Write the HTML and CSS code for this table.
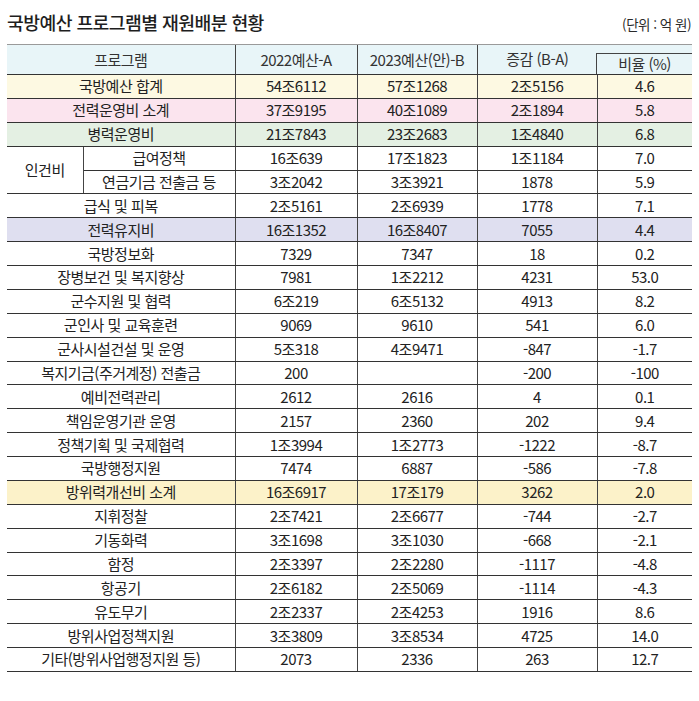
FILE: index.html
```html
<!DOCTYPE html>
<html lang="ko">
<head>
<meta charset="utf-8">
<link rel="stylesheet" href="styles.css">
</head>
<body>
<div class="page">
  <div class="titlebar">
    <h1 class="title">국방예산 프로그램별 재원배분 현황</h1>
    <span class="unit">(단위 : 억 원)</span>
  </div>
  <table class="budget">
    <colgroup>
      <col class="c-sub"><col class="c-prog"><col class="c-num"><col class="c-num2"><col class="c-num3"><col class="c-ratio">
    </colgroup>
    <thead>
      <tr>
        <th colspan="2" class="first">프로그램</th>
        <th>2022예산-A</th>
        <th>2023예산(안)-B</th>
        <th class="delta">증감 (B-A)</th>
        <th class="ratio"><div class="ratio-box">비율 (%)</div></th>
      </tr>
    </thead>
    <tbody>
      <tr class="yellow"><td colspan="2" class="first">국방예산 합계</td><td>54조6112</td><td>57조1268</td><td>2조5156</td><td>4.6</td></tr>
      <tr class="pink"><td colspan="2" class="first">전력운영비 소계</td><td>37조9195</td><td>40조1089</td><td>2조1894</td><td>5.8</td></tr>
      <tr class="green"><td colspan="2" class="first">병력운영비</td><td>21조7843</td><td>23조2683</td><td>1조4840</td><td>6.8</td></tr>
      <tr><td rowspan="2" class="first sub">인건비</td><td>급여정책</td><td>16조639</td><td>17조1823</td><td>1조1184</td><td>7.0</td></tr>
      <tr><td class="inner">연금기금 전출금 등</td><td>3조2042</td><td>3조3921</td><td>1878</td><td>5.9</td></tr>
      <tr><td colspan="2" class="first">급식 및 피복</td><td>2조5161</td><td>2조6939</td><td>1778</td><td>7.1</td></tr>
      <tr class="lavender"><td colspan="2" class="first">전력유지비</td><td>16조1352</td><td>16조8407</td><td>7055</td><td>4.4</td></tr>
      <tr><td colspan="2" class="first">국방정보화</td><td>7329</td><td>7347</td><td>18</td><td>0.2</td></tr>
      <tr><td colspan="2" class="first">장병보건 및 복지향상</td><td>7981</td><td>1조2212</td><td>4231</td><td>53.0</td></tr>
      <tr><td colspan="2" class="first">군수지원 및 협력</td><td>6조219</td><td>6조5132</td><td>4913</td><td>8.2</td></tr>
      <tr><td colspan="2" class="first">군인사 및 교육훈련</td><td>9069</td><td>9610</td><td>541</td><td>6.0</td></tr>
      <tr><td colspan="2" class="first">군사시설건설 및 운영</td><td>5조318</td><td>4조9471</td><td>-847</td><td>-1.7</td></tr>
      <tr><td colspan="2" class="first">복지기금(주거계정) 전출금</td><td>200</td><td></td><td>-200</td><td>-100</td></tr>
      <tr><td colspan="2" class="first">예비전력관리</td><td>2612</td><td>2616</td><td>4</td><td>0.1</td></tr>
      <tr><td colspan="2" class="first">책임운영기관 운영</td><td>2157</td><td>2360</td><td>202</td><td>9.4</td></tr>
      <tr><td colspan="2" class="first">정책기획 및 국제협력</td><td>1조3994</td><td>1조2773</td><td>-1222</td><td>-8.7</td></tr>
      <tr><td colspan="2" class="first">국방행정지원</td><td>7474</td><td>6887</td><td>-586</td><td>-7.8</td></tr>
      <tr class="gold"><td colspan="2" class="first">방위력개선비 소계</td><td>16조6917</td><td>17조179</td><td>3262</td><td>2.0</td></tr>
      <tr><td colspan="2" class="first">지휘정찰</td><td>2조7421</td><td>2조6677</td><td>-744</td><td>-2.7</td></tr>
      <tr><td colspan="2" class="first">기동화력</td><td>3조1698</td><td>3조1030</td><td>-668</td><td>-2.1</td></tr>
      <tr><td colspan="2" class="first">함정</td><td>2조3397</td><td>2조2280</td><td>-1117</td><td>-4.8</td></tr>
      <tr><td colspan="2" class="first">항공기</td><td>2조6182</td><td>2조5069</td><td>-1114</td><td>-4.3</td></tr>
      <tr><td colspan="2" class="first">유도무기</td><td>2조2337</td><td>2조4253</td><td>1916</td><td>8.6</td></tr>
      <tr><td colspan="2" class="first">방위사업정책지원</td><td>3조3809</td><td>3조8534</td><td>4725</td><td>14.0</td></tr>
      <tr><td colspan="2" class="first">기타(방위사업행정지원 등)</td><td>2073</td><td>2336</td><td>263</td><td>12.7</td></tr>
    </tbody>
  </table>
</div>
</body>
</html>
```
FILE: styles.css
```css
html, body {
  margin: 0;
  padding: 0;
  background: #ffffff;
}
body {
  font-family: "Noto Sans CJK KR", "Noto Sans", sans-serif;
  color: #222;
}
.page {
  width: 685px;
  padding: 0 7px 0 7px;
}
.titlebar {
  display: flex;
  justify-content: space-between;
  align-items: flex-end;
  height: 36px;
  box-sizing: border-box;
}
.title {
  margin: 0;
  font-size: 18.3px;
  font-weight: 500;
  letter-spacing: -0.6px;
  line-height: 22px;
  color: #1e1e1e;
  padding-bottom: 3px;
}
.unit {
  font-size: 13.5px;
  letter-spacing: -0.5px;
  color: #2a2a2a;
  line-height: 18px;
  padding-bottom: 3px;
  padding-right: 1px;
}
.budget {
  width: 685px;
  border-collapse: collapse;
  table-layout: fixed;
  margin-top: 8px;
  font-size: 15px;
  letter-spacing: -0.5px;
}
.c-sub { width: 76px; }
.c-prog { width: 152px; }
.c-num { width: 122px; }
.c-num2 { width: 120px; }
.c-num3 { width: 120px; }
.c-ratio { width: 95px; }
.budget th,
.budget td {
  text-align: center;
  padding: 0;
  border-left: 1px solid #444;
  border-bottom: 1px solid #333;
  line-height: 18px;
  font-weight: 400;
}
.budget .first { border-left: none; }
.budget td.sub { border-right: 1px solid #444; }
.budget td.inner { border-left: 1px solid #444; }
.budget thead th {
  background: #e8f5f8;
  height: 29px;
  border-top: 1px solid #9a9a9a;
  color: #333;
  vertical-align: middle;
}
.budget thead th.delta {
  vertical-align: top;
  padding-top: 5px;
  box-sizing: border-box;
}
.budget thead th.ratio {
  border-left: none;
  vertical-align: bottom;
}
.ratio-box {
  margin-top: 8px;
  height: 21px;
  border-top: 1px solid #444;
  border-left: 1px solid #444;
  margin-left: -1px;
  line-height: 20px;
  box-sizing: border-box;
}
.budget tbody tr {
  height: 23.88px;
}
.budget td.sub {
  vertical-align: middle;
}
.yellow { background: #fdf9e2; }
.pink { background: #fbe4ee; }
.green { background: #e4f0e3; }
.lavender { background: #dfdff0; }
.gold { background: #fcf2c9; }
```
